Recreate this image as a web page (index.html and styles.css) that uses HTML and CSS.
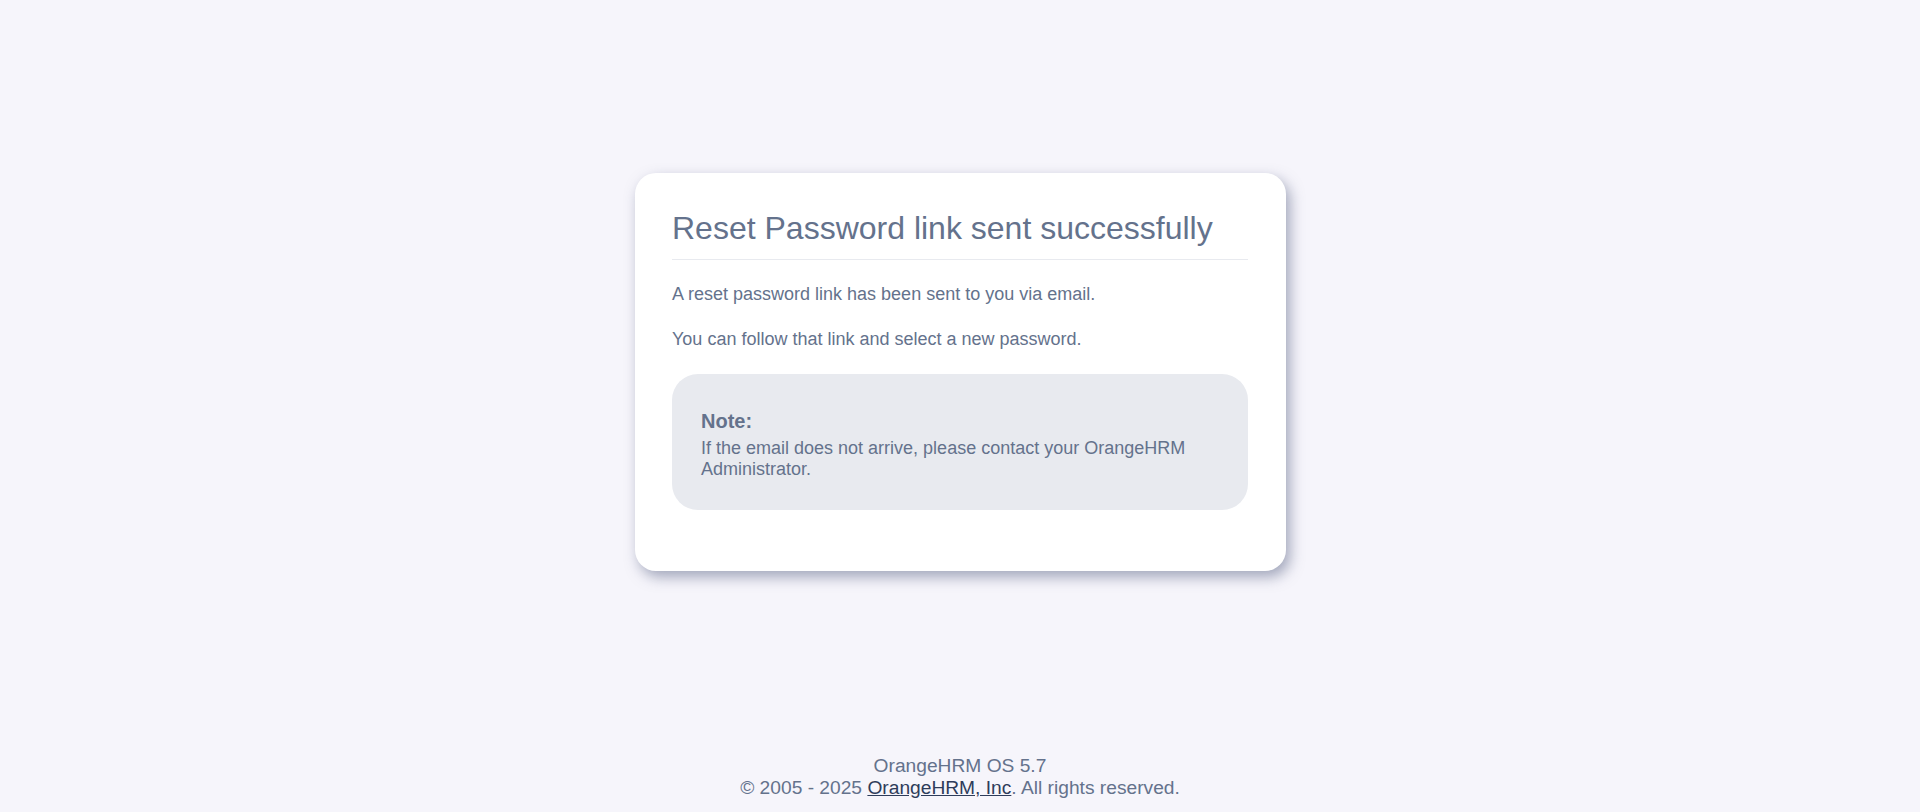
FILE: index.html
```html
<!DOCTYPE html>
<html lang="en">
<head>
<meta charset="utf-8">
<title>OrangeHRM</title>
<link rel="stylesheet" href="styles.css">
</head>
<body>
<div class="page">
  <main class="main">
    <div class="card">
      <h1 class="card-title">Reset Password link sent successfully</h1>
      <p class="card-text">A reset password link has been sent to you via email.</p>
      <p class="card-text">You can follow that link and select a new password.</p>
      <div class="note">
        <p class="note-title">Note:</p>
        <p class="note-text">If the email does not arrive, please contact your OrangeHRM Administrator.</p>
      </div>
    </div>
  </main>
  <footer class="footer">
    <p class="footer-line">OrangeHRM OS 5.7</p>
    <p class="footer-line">&copy; 2005 - 2025 <a class="footer-link" href="#">OrangeHRM, Inc</a>. All rights reserved.</p>
  </footer>
</div>
</body>
</html>
```
FILE: styles.css
```css
html, body {
  margin: 0;
  padding: 0;
}
body {
  background: #f6f5fb;
  font-family: "Liberation Sans", Arial, sans-serif;
  color: #64728c;
}
.page {
  height: 100vh;
  display: flex;
  flex-direction: column;
}
.main {
  flex: 1;
  display: flex;
  align-items: center;
  justify-content: center;
}
.card {
  box-sizing: border-box;
  width: 651px;
  margin-left: 1px;
  background: #ffffff;
  border-radius: 21px;
  padding: 37px 38px 61px 37px;
  box-shadow: 4px 6px 14px rgba(80, 90, 125, 0.5);
}
.card-title {
  margin: 0;
  font-size: 32px;
  font-weight: 400;
  line-height: normal;
  padding-bottom: 12px;
  border-bottom: 1px solid #e8eaef;
}
.card-text {
  margin: 24px 0 0;
  font-size: 18px;
  line-height: 21px;
}
.note {
  margin-top: 24px;
  background: #e8eaef;
  border-radius: 26px;
  padding: 36px 30px 30px 29px;
}
.note-title {
  margin: 0 0 5px;
  font-size: 20px;
  font-weight: 700;
  line-height: normal;
}
.note-text {
  margin: 0;
  font-size: 18px;
  line-height: normal;
}
.footer {
  padding: 11px 0 13px;
  text-align: center;
}
.footer-line {
  margin: 0;
  font-size: 19.2px;
  line-height: normal;
}
.footer-link {
  color: #2e3c5a;
  text-decoration: underline;
}
```
